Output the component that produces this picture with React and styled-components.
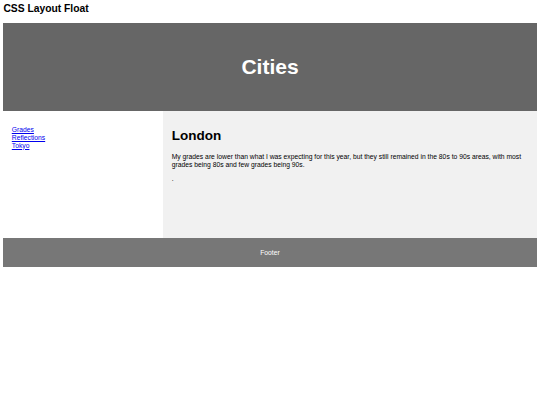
import React from "react";
import styled, { createGlobalStyle } from "styled-components";

const GlobalStyle = createGlobalStyle`
  * {
    box-sizing: border-box;
  }
  body {
    margin: 0;
    background: #fff;
    font-family: "Liberation Sans", Arial, Helvetica, sans-serif;
  }
`;

const Page = styled.div`
  padding: 3.4px 3.4px 0;
`;

const PageTitle = styled.h2`
  margin: 0 0 7.7px;
  font-size: 10.3px;
  line-height: 11.6px;
  font-weight: bold;
  color: #000;
`;

const Header = styled.header`
  height: 88.3px;
  background-color: #666;
  display: flex;
  align-items: center;
  justify-content: center;
`;

const HeaderTitle = styled.h2`
  margin: 0;
  font-size: 21px;
  line-height: 24px;
  font-weight: bold;
  color: #fff;
`;

const Section = styled.section`
  display: flex;
  height: 126.6px;
`;

const Nav = styled.nav`
  width: 30%;
  padding: 8.4px;
  background: #fff;
`;

const NavList = styled.ul`
  list-style: none;
  margin: 6.75px 0;
  padding: 0;
`;

const NavItem = styled.li`
  font-size: 6.75px;
  line-height: 7.8px;
`;

const NavLink = styled.a`
  color: #0000ee;
  text-decoration: underline;
`;

const Article = styled.article`
  width: 70%;
  padding: 8.4px;
  background-color: #f1f1f1;
`;

const ArticleTitle = styled.h1`
  margin: 9px 0;
  font-size: 13.5px;
  line-height: 15.5px;
  font-weight: bold;
  color: #000;
`;

const Paragraph = styled.p`
  margin: 6.75px 0;
  font-size: 6.75px;
  line-height: 7.8px;
  color: #000;
`;

const Footer = styled.footer`
  background-color: #777;
  padding: 4.2px;
  text-align: center;
  color: #fff;
`;

const FooterText = styled.p`
  margin: 6.75px 0;
  font-size: 6.75px;
  line-height: 7.8px;
`;

const links = ["Grades", "Reflections", "Tokyo"];

const App = () => {
  return (
    <>
      <GlobalStyle />
      <Page>
        <PageTitle>CSS Layout Float</PageTitle>
        <Header>
          <HeaderTitle>Cities</HeaderTitle>
        </Header>
        <Section>
          <Nav>
            <NavList>
              {links.map((link) => (
                <NavItem key={link}>
                  <NavLink href="#">{link}</NavLink>
                </NavItem>
              ))}
            </NavList>
          </Nav>
          <Article>
            <ArticleTitle>London</ArticleTitle>
            <Paragraph>
              My grades are lower than what I was expecting for this year, but
              they still remained in the 80s to 90s areas, with most grades
              being 80s and few grades being 90s.
            </Paragraph>
            <Paragraph>.</Paragraph>
          </Article>
        </Section>
        <Footer>
          <FooterText>Footer</FooterText>
        </Footer>
      </Page>
    </>
  );
};

export default App;
